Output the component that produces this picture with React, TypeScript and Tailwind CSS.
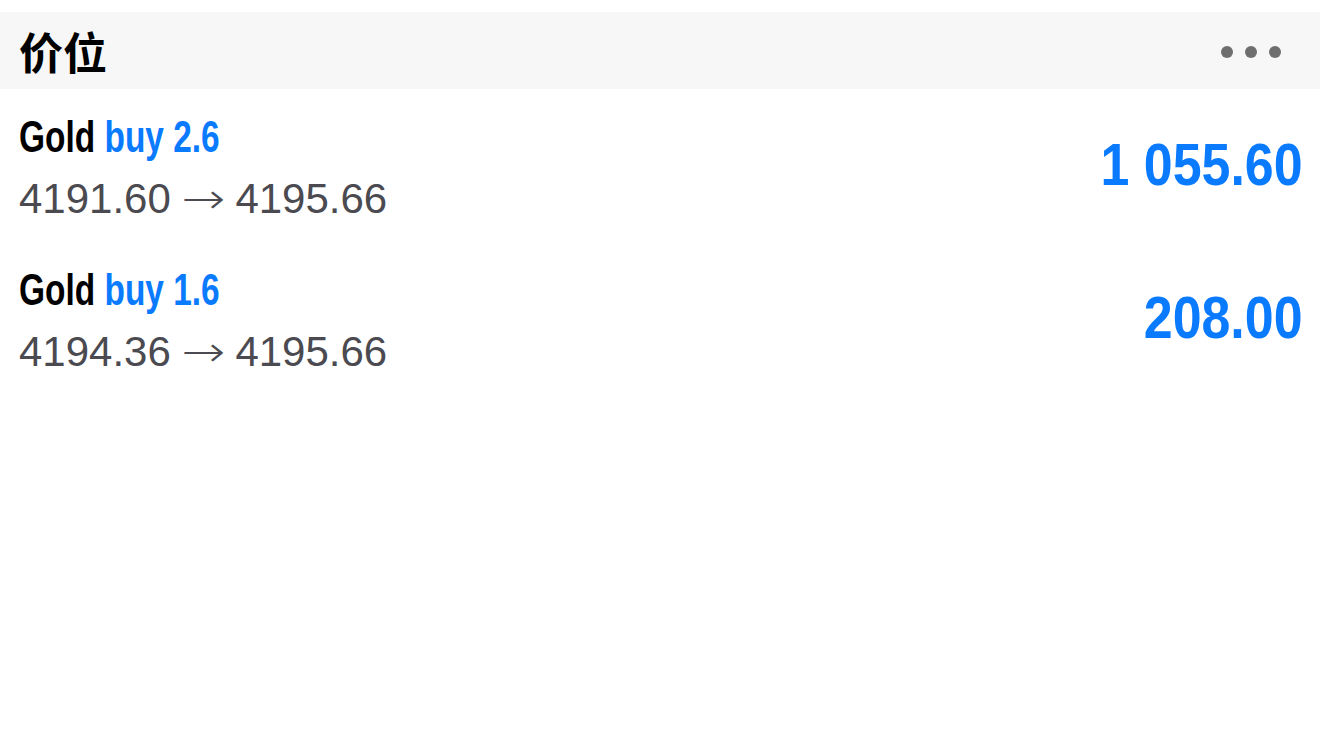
const positions = [
  { lots: "2.6", from: "4191.60", to: "4195.66", profit: "1 055.60" },
  { lots: "1.6", from: "4194.36", to: "4195.66", profit: "208.00" },
];

const sans = { fontFamily: "'Liberation Sans', Arial, sans-serif" };

export default function App() {
  return (
    <div className="min-h-[755px] w-[1320px] bg-white pt-[12px]">
      <header className="flex h-[77px] items-center justify-between bg-[#f7f7f7] pl-[19px] pr-[39px]">
        <h1
          className="text-[44px] font-bold leading-none text-black"
          style={{ fontFamily: "'Noto Sans CJK SC', sans-serif" }}
        >
          价位
        </h1>
        <div className="flex items-center gap-[12px] pt-[2px]">
          <span className="h-[12px] w-[12px] rounded-full bg-[#6e6e6e]" />
          <span className="h-[12px] w-[12px] rounded-full bg-[#6e6e6e]" />
          <span className="h-[12px] w-[12px] rounded-full bg-[#6e6e6e]" />
        </div>
      </header>

      <ul className="pl-[19px] pr-[17px]">
        {positions.map((p) => (
          <li key={p.from} className="flex h-[153px] items-start justify-between pt-[22px]">
            <div>
              <div
                className="origin-left scale-x-[0.76] whitespace-nowrap text-[44px] font-bold leading-[52px] text-black"
                style={sans}
              >
                Gold <span className="text-[#0a7aff]">buy {p.lots}</span>
              </div>
              <div className="mt-[10px] whitespace-nowrap text-[42px] leading-[52px] text-[#4a4a50]" style={sans}>
                {p.from}{" "}
                <span
                  style={{ fontFamily: "'DejaVu Sans', sans-serif" }}
                  className="mx-[3px] inline-block scale-x-[1.25] font-light"
                >
                  →
                </span>{" "}
                {p.to}
              </div>
            </div>
            <div
              className="mt-[24px] origin-right scale-x-[0.865] whitespace-nowrap text-[60px] font-bold leading-none text-[#0a7aff]"
              style={sans}
            >
              {p.profit}
            </div>
          </li>
        ))}
      </ul>
    </div>
  );
}
